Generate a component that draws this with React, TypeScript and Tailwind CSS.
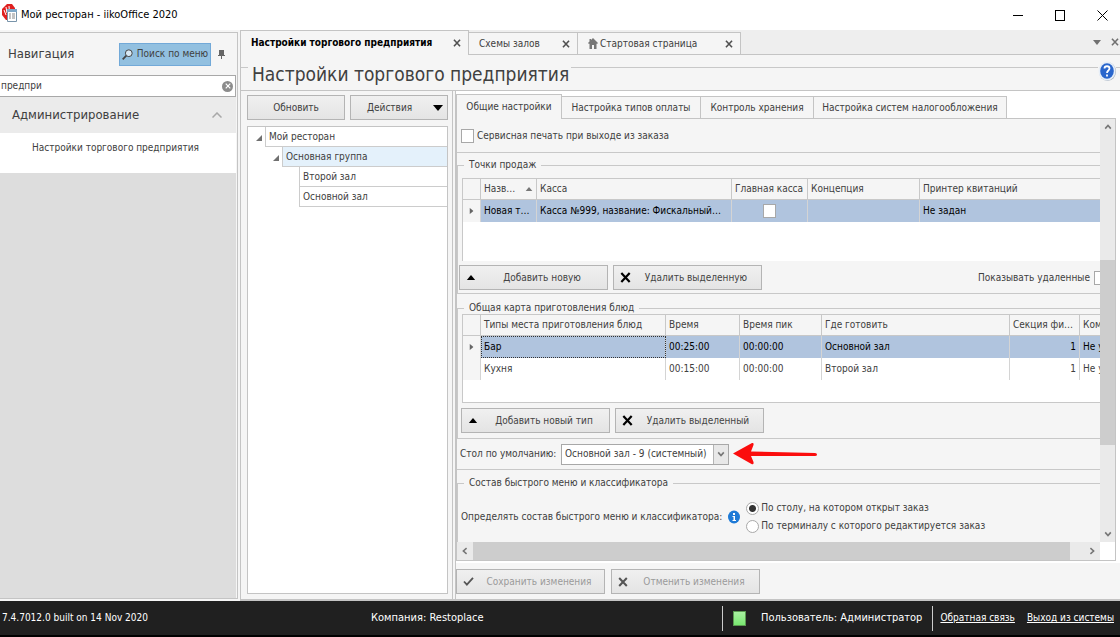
import type { ReactNode } from "react";
import { clsx } from "clsx";

const tabs = [
  { name: "Настройки торгового предприятия", width: "w-[229px]", active: true },
  { name: "Схемы залов", width: "w-[109px]" },
  { name: "Стартовая страница", width: "w-[163px]", home: true },
];

const settingsTabs = [
  { name: "Общие настройки", width: "w-[106px]", active: true },
  { name: "Настройка типов оплаты", width: "w-[139px]" },
  { name: "Контроль хранения", width: "w-[113px]" },
  { name: "Настройка систем налогообложения", width: "w-[193px]" },
];

const tree = [
  { name: "Мой ресторан", indent: "pl-[17px]", open: true },
  { name: "Основная группа", indent: "pl-[34px]", open: true, selected: true },
  { name: "Второй зал", indent: "pl-[51px]" },
  { name: "Основной зал", indent: "pl-[51px]" },
];

const cookingPlaces = [
  { type: "Бар", time: "00:25:00", peak: "00:00:00", where: "Основной зал", section: 1, selected: true },
  { type: "Кухня", time: "00:15:00", peak: "00:00:00", where: "Второй зал", section: 1 },
];

function Cross({ className }: { className?: string }) {
  return (
    <svg viewBox="0 0 10 10" className={className} fill="none" stroke="currentColor" strokeWidth="2">
      <path d="M1.2 1 8.8 9M8.8 1 1.2 9" />
    </svg>
  );
}

function Chevron({ className }: { className?: string }) {
  return (
    <svg viewBox="0 0 10 10" className={className} fill="none" stroke="currentColor" strokeWidth="2">
      <path d="M1.5 7 5 3 8.5 7" />
    </svg>
  );
}

function Triangle({ className }: { className?: string }) {
  return (
    <svg viewBox="0 0 10 6" className={className} fill="currentColor">
      <path d="M5 0 10 6H0z" />
    </svg>
  );
}

function Check({ className }: { className?: string }) {
  return (
    <svg viewBox="0 0 12 10" className={className} fill="none" stroke="currentColor" strokeWidth="2">
      <path d="M1 5 4.2 8.5 11 1" />
    </svg>
  );
}

function ActionButton({ icon, children, disabled }: { icon: ReactNode; children: ReactNode; disabled?: boolean }) {
  return (
    <button
      disabled={disabled}
      className={clsx(
        "flex h-[25px] w-[149px] shrink-0 items-center border border-[#b4b4b4] bg-linear-to-b from-[#f0f0f0] to-[#e4e4e4] pl-[5px]",
        disabled ? "text-[#9a9a9a]" : "text-[#444]"
      )}
    >
      <span className={clsx("flex w-3 justify-center", disabled ? "text-[#555]" : "text-black")}>{icon}</span>
      <span className="flex-1 text-center">{children}</span>
    </button>
  );
}

function Group({ title, className, children }: { title: string; className?: string; children: ReactNode }) {
  return (
    <fieldset className={clsx("min-w-0 border border-[#c8c8c8]", className)}>
      <legend className="ml-[6px] h-4 px-[5px] leading-4">{title}</legend>
      {children}
    </fieldset>
  );
}

const box = "h-[14px] w-[13px] shrink-0 appearance-none border border-[#a8a8a8] bg-white checked:bg-[#555]";
const radio =
  "size-[13px] appearance-none rounded-full border border-[#a8a8a8] bg-white checked:bg-[radial-gradient(#333_0_3px,white_4px)]";
const th = "h-[21px] truncate border-r border-b border-[#c8c8c8] px-[3px] text-left font-normal";
const td = "h-[22px] truncate border-r border-[#d4d4d4] px-[3px]";

export default function App() {
  return (
    <div className="flex h-screen flex-col overflow-hidden bg-[#f5f5f5] font-['DejaVu_Sans_Condensed','DejaVu_Sans',sans-serif] text-[10px] leading-4 text-[#404040]">
      {/* Window title */}
      <header className="flex h-[30px] shrink-0 items-center bg-white pr-3 pl-[2px] text-black">
        <svg viewBox="0 0 16 18" className="mb-1 h-[18px] w-4">
          <path d="M5 0H10L13 4V12L9 16H4L0 11V5z" fill="#e02020" />
          <path d="M4 3 5 9M7 2 7.4 8M2 6 4 11" stroke="#fff" />
          <path d="M5.5 5.5h9v12h-9z" fill="#fff" stroke="#7894aa" />
          <path d="M5 5h10v3H5z" fill="#7fa8c8" />
          <path d="M7 10h2m1 0h3M7 12h2m1 0h3M7 14h2m1 0h3" stroke="#888" />
        </svg>
        <h1 className="ml-[3px] flex-1 text-[11px]">Мой ресторан - iikoOffice 2020</h1>
        <div className="flex items-center gap-8">
          <button aria-label="Свернуть" className="flex h-3 w-[10px] items-center">
            <span className="h-px w-full bg-black" />
          </button>
          <button aria-label="Развернуть" className="h-[11px] w-[10px] border border-black" />
          <button aria-label="Закрыть">
            <svg viewBox="0 0 11 11" className="size-[11px]" stroke="#000" fill="none">
              <path d="M.5.5l10 10M10.5.5l-10 10" />
            </svg>
          </button>
        </div>
      </header>

      <div className="flex min-h-0 flex-1">
        {/* Navigation */}
        <aside className="my-[2px] flex w-[238px] shrink-0 flex-col border-t border-r border-b border-[#c4c4c4] pr-px">
          <div className="flex h-[42px] shrink-0 items-center pr-[11px] pl-2">
            <h2 className="flex-1 text-[13px]">Навигация</h2>
            <button className="flex h-[23px] w-[92px] items-center justify-center gap-1 border border-[#72a9d8] bg-[#92c0e0]">
              <svg viewBox="0 0 11 11" className="size-[11px]" fill="#d8e8f4" stroke="#444">
                <circle cx="6.8" cy="4.2" r="3.4" />
                <path d="M4.3 6.7.7 10.3" strokeWidth="1.8" />
              </svg>
              Поиск по меню
            </button>
            <button aria-label="Закрепить" className="ml-[7px]">
              <svg viewBox="0 0 7 9" className="h-[9px] w-[7px]" fill="#666">
                <path d="M1 0h5v5h1v1H4v3H3V6H0V5h1z" />
              </svg>
            </button>
          </div>
          <div className="flex h-[22px] shrink-0 items-center border border-l-0 border-[#a8a8a8] bg-white pr-[2px]">
            <input aria-label="Поиск по меню" defaultValue="предпри" className="min-w-0 flex-1 pl-px outline-none" />
            <button aria-label="Очистить" className="flex size-[11px] items-center justify-center rounded-full bg-[#8c8c8c] text-white">
              <Cross className="size-[6px]" />
            </button>
          </div>
          <button className="flex h-9 shrink-0 items-center bg-[#ebebeb] pr-[14px] pl-3 text-[13px]">
            <span className="flex-1 text-left">Администрирование</span>
            <svg viewBox="0 0 10 6" className="h-[6px] w-[10px]" fill="none" stroke="#a8a8a8" strokeWidth="1.5">
              <path d="M.5 5.5 5 1 9.5 5.5" />
            </svg>
          </button>
          <a href="#enterprise" className="flex h-10 shrink-0 items-center bg-white pb-[10px] pl-8">
            Настройки торгового предприятия
          </a>
          <div className="flex-1 bg-[#ddd]" />
        </aside>

        <main className="ml-[2px] flex min-w-0 flex-1 flex-col">
          {/* Document tabs */}
          <div className="flex h-[25px] shrink-0 items-end bg-[#eee]">
            {tabs.map((tab) => (
              <div
                key={tab.name}
                className={clsx(
                  "flex shrink-0 items-center border-t border-r border-[#c4c4c4] bg-[#f5f5f5] pr-[7px] pl-[10px]",
                  tab.width,
                  tab.active ? "h-[25px] border-l font-bold text-black" : "h-[23px] border-b"
                )}
              >
                {tab.home && (
                  <svg viewBox="0 0 10 11" className="mr-[2px] h-[11px] w-[10px]" fill="#777">
                    <path d="M5 0 10 5 9 6 8.5 5.5V11H6V7H4v4H1.5V5.5L1 6 0 5 1.5 3.5V1H3v1z" />
                  </svg>
                )}
                <span className="flex-1 whitespace-nowrap">{tab.name}</span>
                <button aria-label="Закрыть вкладку" className="text-[#505050]">
                  <Cross className="size-[8px]" />
                </button>
              </div>
            ))}
            <div className="flex h-full flex-1 items-center justify-end gap-[10px] border-b border-[#c4c4c4] pr-px text-[#707070]">
              <button aria-label="Список вкладок">
                <Triangle className="h-[5px] w-[8px] rotate-180" />
              </button>
              <button aria-label="Закрыть">
                <Cross className="size-[8px]" />
              </button>
            </div>
          </div>

          <div className="flex h-9 shrink-0 items-start border-b border-l border-[#c4c4c4]">
            <span className="mt-3 h-px w-[7px] bg-[#c8c8c8]" />
            <h2 className="mr-[2px] ml-1 mt-[7px] text-[19px] leading-6 whitespace-nowrap">Настройки торгового предприятия</h2>
            <span className="mt-3 h-px flex-1 bg-[#c8c8c8]" />
            <button aria-label="Справка" className="mt-[6px]">
              <svg viewBox="0 0 18 20" className="h-5 w-[18px]">
                <ellipse cx="9.5" cy="10.5" rx="8.5" ry="9.5" fill="#aab4c0" />
                <ellipse cx="9" cy="10" rx="8.5" ry="9.5" fill="#e6eef8" />
                <ellipse cx="9" cy="10" rx="6.8" ry="7.8" fill="#2a66cc" />
                <path d="M6.5 7.5C6.5 4.5 11.5 4.5 11.5 7.5 11.5 9.5 9 9.5 9 12M9 13.5v2" fill="none" stroke="#fff" strokeWidth="1.8" />
              </svg>
            </button>
            <span className="mt-3 h-px w-1 bg-[#c8c8c8]" />
          </div>

          <div className="flex min-h-0 flex-1 border-b-2 border-l border-[#c4c4c4]">
            {/* Enterprise tree */}
            <section className="flex w-[212px] shrink-0 flex-col border-r border-[#c4c4c4] pt-1 pr-1 pb-[5px] pl-[6px]">
              <div className="flex justify-between">
                <button className="h-[25px] w-[98px] border border-[#b4b4b4] bg-linear-to-b from-[#f0f0f0] to-[#e4e4e4]">
                  Обновить
                </button>
                <button className="flex h-[25px] w-[98px] items-center border border-[#b4b4b4] bg-linear-to-b from-[#f0f0f0] to-[#e4e4e4] pr-1 pl-4">
                  <span className="flex-1 text-left">Действия</span>
                  <Triangle className="h-[6px] w-[10px] rotate-180 text-black" />
                </button>
              </div>
              <ul className="mt-[6px] flex-1 border border-[#c4c4c4] bg-white">
                {tree.map((node) => (
                  <li key={node.name} className={clsx("flex h-5", node.indent)}>
                    <div className="relative flex flex-1 items-center border-b border-l border-[#ccc]">
                      {node.open && (
                        <svg viewBox="0 0 6 6" className="absolute top-[8px] -left-[10px] size-[6px]" fill="#707070">
                          <path d="M6 0v6H0z" />
                        </svg>
                      )}
                      <span className={clsx("h-full flex-1 pt-[2px] pl-[3px]", node.selected && "bg-[#e4f1fb]")}>
                        {node.name}
                      </span>
                    </div>
                  </li>
                ))}
              </ul>
            </section>

            <section className="ml-[2px] flex min-w-0 flex-1 flex-col border-l border-[#c4c4c4]">
              <div className="flex min-h-0 flex-1 flex-col bg-white pt-[3px] pr-1 pb-[2px]">
                {/* Settings tabs */}
                <div className="flex h-[25px] shrink-0 items-end">
                  {settingsTabs.map((tab) => (
                    <button
                      key={tab.name}
                      className={clsx(
                        "shrink-0 border-t border-r border-[#c4c4c4] bg-[#f5f5f5] whitespace-nowrap",
                        tab.width,
                        tab.active ? "h-[25px] border-l" : "h-[23px] border-b"
                      )}
                    >
                      {tab.name}
                    </button>
                  ))}
                  <span className="h-px flex-1 bg-[#c4c4c4]" />
                </div>

                <div className="flex min-h-0 flex-1 border-r border-l border-[#c4c4c4] bg-[#f5f5f5]">
                  <div className="min-w-0 flex-1 overflow-hidden">
                    {/* The form is wider than its viewport */}
                    <div className="w-[calc(100%+40px)]">
                      <div className="border-b border-[#c8c8c8] pt-[9px] pb-2 pl-[4px]">
                        <label className="flex items-center gap-[3px]">
                          <input type="checkbox" className={box} />
                          Сервисная печать при выходе из заказа
                        </label>
                      </div>

                      <Group title="Точки продаж" className="mt-1 pb-[3px]">
                        <div className="mt-[5px] ml-1 h-[83px] border-t border-l border-[#c8c8c8] bg-white">
                          <table className="w-full table-fixed border-separate border-spacing-0">
                            <colgroup>
                              <col className="w-[18px]" />
                              <col className="w-[56px]" />
                              <col className="w-[195px]" />
                              <col className="w-[76px]" />
                              <col className="w-[112px]" />
                              <col />
                            </colgroup>
                            <thead className="bg-[#f5f5f5]">
                              <tr>
                                <th className={th} />
                                <th className={th}>
                                  <span className="flex items-center justify-between">
                                    Назв…
                                    <Triangle className="h-[4px] w-[8px] text-[#777]" />
                                  </span>
                                </th>
                                <th className={th}>Касса</th>
                                <th className={th}>Главная касса</th>
                                <th className={th}>Концепция</th>
                                <th className={th}>Принтер квитанций</th>
                              </tr>
                            </thead>
                            <tbody>
                              <tr className="bg-[#b0c4de] text-black">
                                <td className={clsx(td, "bg-[#f5f5f5]")}>
                                  <Triangle className="mx-auto h-1 w-[7px] rotate-90 text-[#666]" />
                                </td>
                                <td className={td}>Новая т…</td>
                                <td className={td}>Касса №999, название: Фискальный…</td>
                                <td className={td}>
                                  <input type="checkbox" aria-label="Главная касса" className={clsx(box, "mx-auto block")} />
                                </td>
                                <td className={td} />
                                <td className={td}>Не задан</td>
                              </tr>
                            </tbody>
                          </table>
                        </div>
                        <div className="mt-1 flex items-center gap-[5px] pl-px">
                          <ActionButton icon={<Triangle className="h-[5px] w-[10px]" />}>Добавить новую</ActionButton>
                          <ActionButton icon={<Cross className="size-[11px]" />}>Удалить выделенную</ActionButton>
                          <label className="mr-8 ml-auto flex items-center gap-1">
                            Показывать удаленные
                            <input type="checkbox" className={box} />
                          </label>
                        </div>
                      </Group>

                      <Group title="Общая карта приготовления блюд" className="mt-[6px] pb-[5px]">
                        <div className="-mt-[2px] ml-1 h-[89px] border-t border-b border-l border-[#c8c8c8] bg-white">
                          <table className="w-full table-fixed border-separate border-spacing-0">
                            <colgroup>
                              <col className="w-[18px]" />
                              <col className="w-[185px]" />
                              <col className="w-[74px]" />
                              <col className="w-[82px]" />
                              <col className="w-[188px]" />
                              <col className="w-[70px]" />
                              <col />
                            </colgroup>
                            <thead className="bg-[#f5f5f5]">
                              <tr>
                                <th className={th} />
                                <th className={th}>Типы места приготовления блюд</th>
                                <th className={th}>Время</th>
                                <th className={th}>Время пик</th>
                                <th className={th}>Где готовить</th>
                                <th className={th}>Секция фи…</th>
                                <th className={th}>Комментарий</th>
                              </tr>
                            </thead>
                            <tbody>
                              {cookingPlaces.map((place) => (
                                <tr key={place.type} className={clsx(place.selected && "bg-[#b0c4de] text-black")}>
                                  <td className={clsx(td, "bg-[#f5f5f5]")}>
                                    {place.selected && <Triangle className="mx-auto h-1 w-[7px] rotate-90 text-[#666]" />}
                                  </td>
                                  <td className={clsx(td, place.selected && "outline-1 -outline-offset-1 outline-[#333] outline-dotted")}>
                                    {place.type}
                                  </td>
                                  <td className={td}>{place.time}</td>
                                  <td className={td}>{place.peak}</td>
                                  <td className={td}>{place.where}</td>
                                  <td className={clsx(td, "text-right")}>{place.section}</td>
                                  <td className={td}>Не указано</td>
                                </tr>
                              ))}
                            </tbody>
                          </table>
                        </div>
                        <div className="mt-[5px] flex gap-[5px] pl-[3px]">
                          <ActionButton icon={<Triangle className="h-[5px] w-[10px]" />}>Добавить новый тип</ActionButton>
                          <ActionButton icon={<Cross className="size-[11px]" />}>Удалить выделенный</ActionButton>
                        </div>
                      </Group>

                      <div className="flex h-[31px] items-center border-b border-[#c8c8c8] pl-[3px]">
                        <label htmlFor="default-table" className="w-[101px] whitespace-nowrap">
                          Стол по умолчанию:
                        </label>
                        <div className="relative">
                          <select
                            id="default-table"
                            className="h-[21px] w-[168px] appearance-none border border-[#a8a8a8] bg-white pl-[3px]"
                          >
                            <option>Основной зал - 9 (системный)</option>
                          </select>
                          <span className="pointer-events-none absolute top-px right-px flex h-[19px] w-[15px] items-center justify-center border-l border-[#b4b4b4] bg-[#e8e8e8]">
                            <Chevron className="size-[8px] rotate-180 text-[#777]" />
                          </span>
                        </div>
                        <svg viewBox="0 0 84 24" className="ml-1 h-6 w-[84px]" fill="#fb0d0d">
                          <path d="M0 11.5 19 1Q21 .5 20.5 3L18 9.500 82 11Q84 11.2 84 12.5 84 14 82 14L18 14 20.5 20Q21 23 18.5 22z" />
                        </svg>
                      </div>

                      <Group title="Состав быстрого меню и классификатора" className="mt-[5px] border-b-0 pb-2">
                        <div className="mt-[9px] flex items-center pl-[3px]">
                          <span>Определять состав быстрого меню и классификатора:</span>
                          <svg viewBox="0 0 12 14" className="ml-[6px] h-[14px] w-3">
                            <ellipse cx="6" cy="7" rx="6" ry="6.5" fill="#1e7ad6" />
                            <path d="M5 3h2v2H5zM4.5 6H7v4h1v1H4.5v-1h1V7h-1z" fill="#fff" />
                          </svg>
                          <div className="ml-[6px] flex flex-col gap-[2px]">
                            <label className="flex items-center gap-[2px]">
                              <input type="radio" name="source" defaultChecked className={radio} />
                              По столу, на котором открыт заказ
                            </label>
                            <label className="flex items-center gap-[2px]">
                              <input type="radio" name="source" className={radio} />
                              По терминалу с которого редактируется заказ
                            </label>
                          </div>
                        </div>
                      </Group>
                    </div>
                  </div>

                  {/* Vertical scrollbar */}
                  <div className="flex w-[15px] shrink-0 flex-col items-center bg-[#eaeaea] py-1 text-[#777]">
                    <Chevron className="size-[8px]" />
                    <div className="flex w-full flex-1 flex-col">
                      <div className="flex-[129]" />
                      <div className="flex-[184] bg-[#cdcdcd]" />
                      <div className="flex-[85]" />
                    </div>
                    <Chevron className="size-[8px] rotate-180" />
                  </div>
                </div>

                {/* Horizontal scrollbar */}
                <div className="flex h-[19px] shrink-0 items-stretch border-r border-b border-l border-[#c4c4c4] text-[#777]">
                  <div className="flex w-4 items-center justify-center bg-[#eaeaea]">
                    <Chevron className="size-[8px] -rotate-90" />
                  </div>
                  <div className="flex-1 bg-[#cdcdcd]" />
                  <div className="mr-[15px] flex w-[30px] items-center justify-end bg-[#eaeaea] pr-1">
                    <Chevron className="size-[8px] rotate-90" />
                  </div>
                </div>
              </div>

              <div className="flex gap-[6px] pt-[6px] pb-[5px]">
                <ActionButton disabled icon={<Check className="h-[9px] w-[11px]" />}>
                  Сохранить изменения
                </ActionButton>
                <ActionButton disabled icon={<Cross className="size-[10px]" />}>
                  Отменить изменения
                </ActionButton>
              </div>
            </section>
          </div>
        </main>
      </div>

      {/* Status bar */}
      <footer className="flex h-[36px] shrink-0 items-center border-b-2 border-black bg-[#202020] pr-[6px] pl-[2px] text-white">
        <span className="w-[369px]">7.4.7012.0 built on 14 Nov 2020</span>
        <span className="flex-1 text-[11px]">Компания: Restoplace</span>
        <div className="flex h-[25px] items-center border-l border-[#ccc] pl-[10px]">
          <span className="h-[15px] w-[13px] border border-[#5a9a50] bg-linear-to-b from-[#a8f0a0] to-[#78e870]" />
          <span className="ml-[15px] text-[11px]">Пользователь: Администратор</span>
        </div>
        <nav className="ml-[10px] flex h-[25px] items-center gap-3 border-l border-[#ccc] pl-[7px]">
          <a href="#feedback" className="underline">Обратная связь</a>
          <a href="#logout" className="underline">Выход из системы</a>
        </nav>
      </footer>
    </div>
  );
}
